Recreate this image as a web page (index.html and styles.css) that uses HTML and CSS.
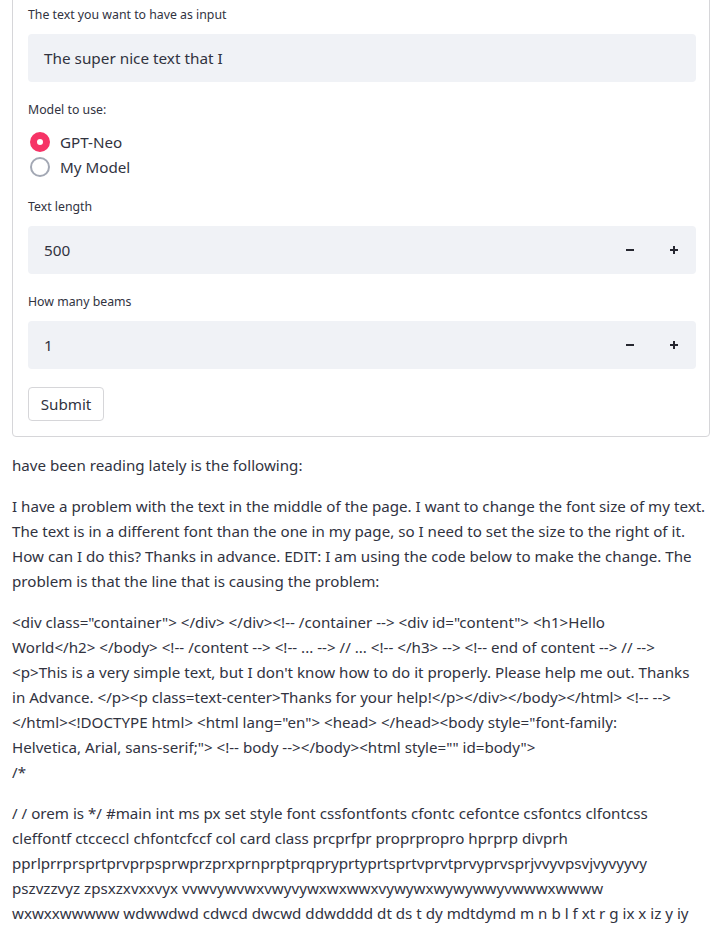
FILE: index.html
```html
<!DOCTYPE html>
<html lang="en">
<head>
<meta charset="utf-8">
<title>Text generation</title>
<link rel="stylesheet" href="styles.css">
</head>
<body>
<main class="page">
  <form class="card">
    <div class="field">
      <label class="label">The text you want to have as input</label>
      <div class="input"><span>The super nice text that I</span></div>
    </div>
    <div class="field">
      <label class="label">Model to use:</label>
      <div class="radios">
        <div class="radio-row"><span class="dot dot-on"></span><span>GPT-Neo</span></div>
        <div class="radio-row"><span class="dot"></span><span>My Model</span></div>
      </div>
    </div>
    <div class="field">
      <label class="label">Text length</label>
      <div class="input number">
        <span class="value">500</span>
        <span class="step"><svg width="10" height="10" viewBox="0 0 10 10"><rect x="1" y="4" width="8" height="2" fill="#262730"/></svg></span>
        <span class="step"><svg width="10" height="10" viewBox="0 0 10 10"><rect x="1" y="4" width="8" height="2" fill="#262730"/><rect x="4" y="1" width="2" height="8" fill="#262730"/></svg></span>
      </div>
    </div>
    <div class="field field-last">
      <label class="label">How many beams</label>
      <div class="input number">
        <span class="value">1</span>
        <span class="step"><svg width="10" height="10" viewBox="0 0 10 10"><rect x="1" y="4" width="8" height="2" fill="#262730"/></svg></span>
        <span class="step"><svg width="10" height="10" viewBox="0 0 10 10"><rect x="1" y="4" width="8" height="2" fill="#262730"/><rect x="4" y="1" width="2" height="8" fill="#262730"/></svg></span>
      </div>
    </div>
    <button type="button" class="submit">Submit</button>
  </form>

  <section class="output">
    <p>have been reading lately is the following:</p>
    <p><span class="ln">I have a problem with the text in the middle of the page. I want to change the font size of my text.</span><br><span class="ln">The text is in a different font than the one in my page, so I need to set the size to the right of it.</span><br><span class="ln">How can I do this? Thanks in advance. EDIT: I am using the code below to make the change. The</span><br><span class="ln">problem is that the line that is causing the problem:</span></p>
    <p><span class="ln">&lt;div class="container"&gt; &lt;/div&gt; &lt;/div&gt;&lt;!-- /container --&gt; &lt;div id="content"&gt; &lt;h1&gt;Hello</span><br><span class="ln">World&lt;/h2&gt; &lt;/body&gt; &lt;!-- /content --&gt; &lt;!-- ... --&gt; // ... &lt;!-- &lt;/h3&gt; --&gt; &lt;!-- end of content --&gt; // --&gt;</span><br><span class="ln">&lt;p&gt;This is a very simple text, but I don't know how to do it properly. Please help me out. Thanks</span><br><span class="ln">in Advance. &lt;/p&gt;&lt;p class=text-center&gt;Thanks for your help!&lt;/p&gt;&lt;/div&gt;&lt;/body&gt;&lt;/html&gt; &lt;!-- --&gt;</span><br><span class="ln">&lt;/html&gt;&lt;!DOCTYPE html&gt; &lt;html lang="en"&gt; &lt;head&gt; &lt;/head&gt;&lt;body style="font-family:</span><br><span class="ln">Helvetica, Arial, sans-serif;"&gt; &lt;!-- body --&gt;&lt;/body&gt;&lt;html style="" id=body"&gt;</span><br><span class="ln">/*</span></p>
    <p><span class="ln">/ / orem is */ #main int ms px set style font cssfontfonts cfontc cefontce csfontcs clfontcss</span><br><span class="ln">cleffontf ctcceccl chfontcfccf col card class prcprfpr proprpropro hprprp divprh</span><br><span class="ln">pprlprrprsprtprvprpsprwprzprxprnprptprqpryprtyprtsprtvprvtprvyprvsprjvvyvpsvjvyvyyvy</span><br><span class="ln">pszvzzvyz zpsxzxvxxvyx vvwvywvwxvwyvywxwxwwxvywywxwywywwyvwwwxwwww</span><br><span class="ln">wxwxxwwwww wdwwdwd cdwcd dwcwd ddwdddd dt ds t dy mdtdymd m n b l f xt r g ix x iz y iy</span></p>
  </section>
</main>
</body>
</html>
```

FILE: styles.css
```css
* { box-sizing: border-box; }

html, body {
  margin: 0;
  padding: 0;
  background: #ffffff;
}

body {
  font-family: "Noto Sans", "Open Sans", sans-serif;
  color: #31333f;
  overflow: hidden;
}

.page {
  padding: 0 10px 0 12px;
}

.card {
  margin-top: -10px;
  border: 1px solid #d6d6d9;
  border-radius: 4px;
  padding: 13px 13px 15px 15px;
  display: flex;
  flex-direction: column;
  align-items: stretch;
}

.field {
  display: flex;
  flex-direction: column;
  margin-bottom: 17px;
}

.field-last {
  margin-bottom: 18px;
}

.label {
  font-size: 12.3px;
  line-height: 22px;
  height: 22px;
  margin-bottom: 8px;
  color: #31333f;
}

.input {
  height: 48px;
  background: #f0f2f6;
  border-radius: 4px;
  display: flex;
  align-items: center;
  padding-left: 16px;
  font-size: 15.3px;
  color: #31333f;
}

.number {
  padding-right: 0;
}

.number .value {
  flex: 1;
}

.step {
  width: 44px;
  height: 48px;
  display: flex;
  align-items: center;
  justify-content: center;
}

.radios {
  display: flex;
  flex-direction: column;
}

.radio-row {
  display: flex;
  align-items: center;
  height: 25px;
  font-size: 15.2px;
  gap: 10px;
  padding-left: 2px;
}

.dot {
  width: 20px;
  height: 20px;
  border-radius: 50%;
  border: 2px solid #a3a8b4;
  background: #ffffff;
  flex: none;
}

.dot-on {
  border: 7px solid #f63366;
  background: #ffffff;
}

.submit {
  align-self: flex-start;
  width: 76px;
  height: 34px;
  border: 1px solid #d6d6d9;
  border-radius: 4px;
  background: #ffffff;
  font-family: inherit;
  font-size: 15.2px;
  color: #31333f;
  padding: 0;
}

.output {
  padding-top: 16px;
}

.output p {
  margin: 0 0 16px 0;
  font-size: 15.15px;
  line-height: 25px;
}

.ln {
  white-space: nowrap;
}
```
